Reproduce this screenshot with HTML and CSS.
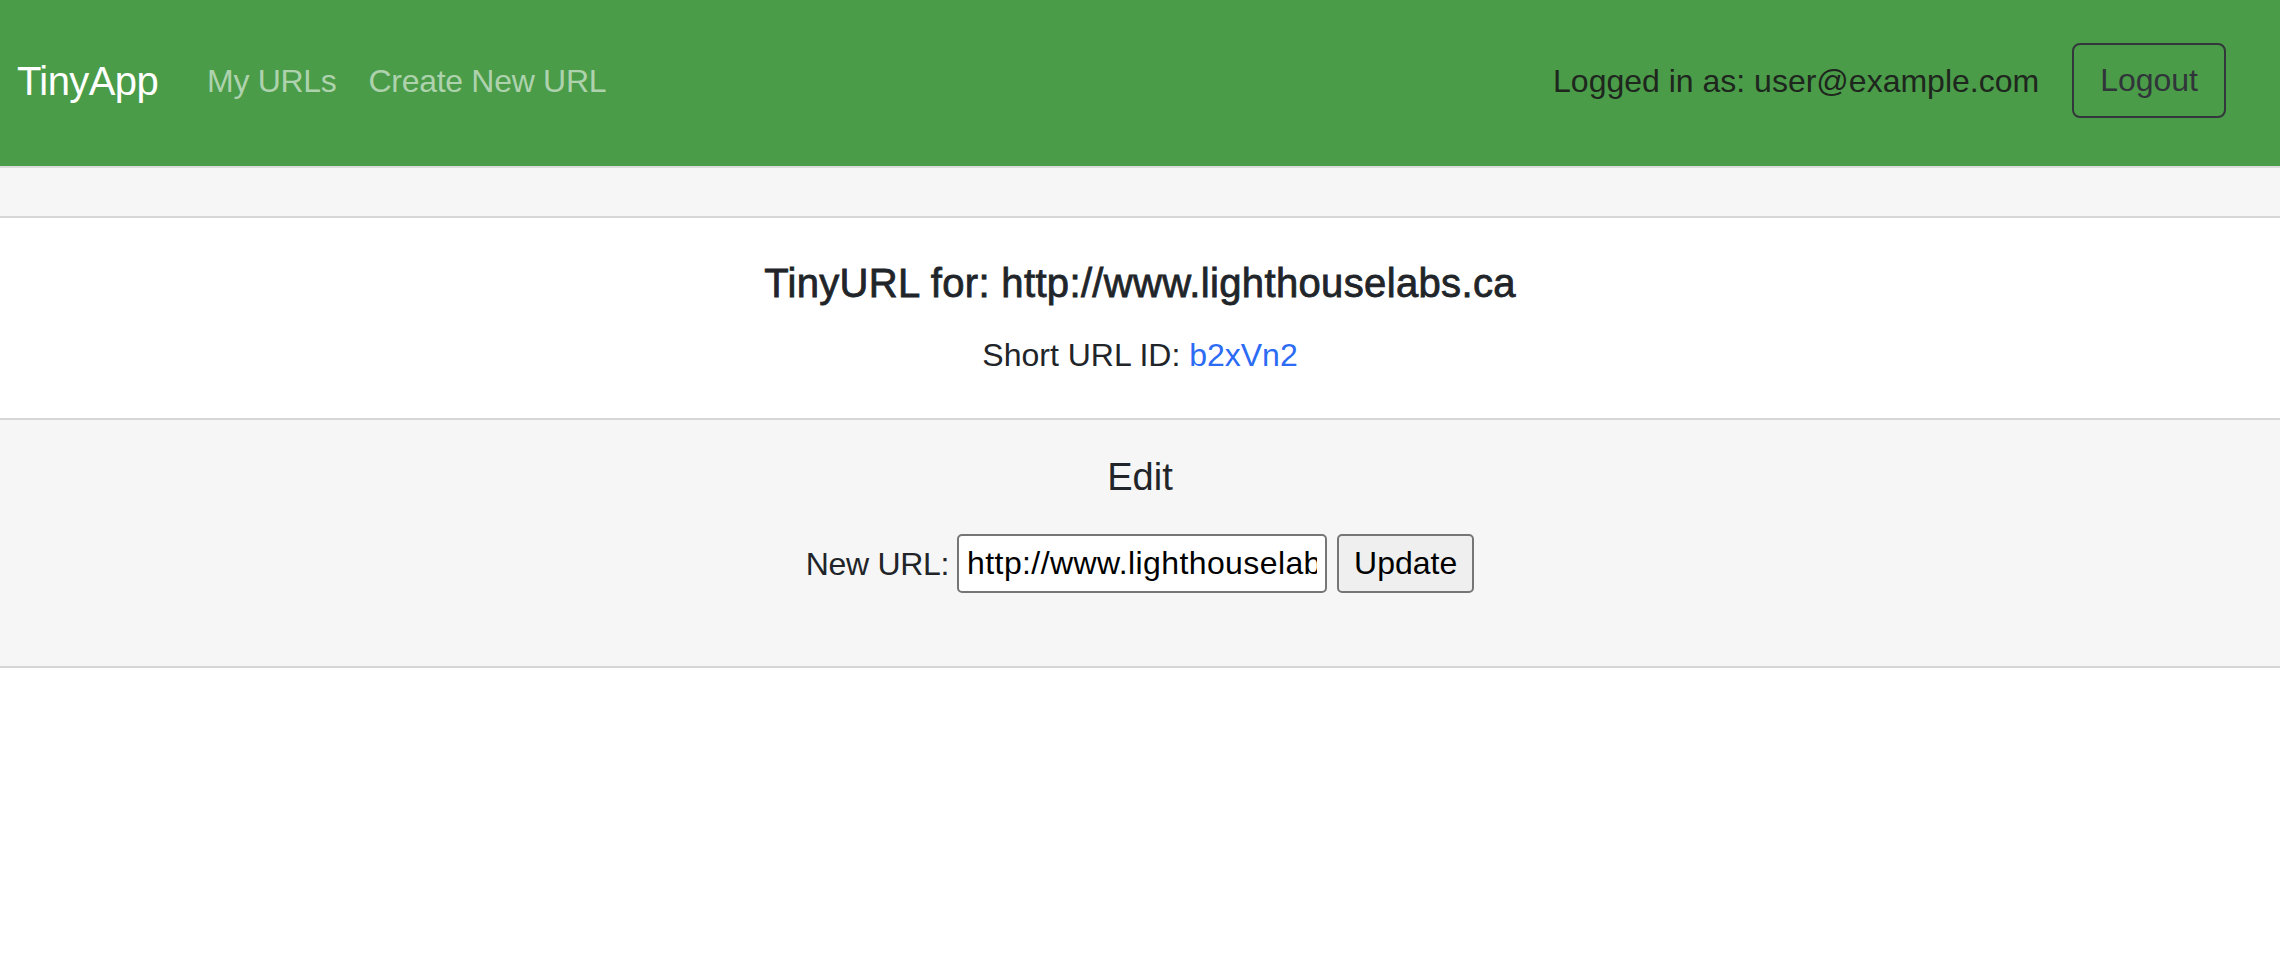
FILE: index.html
```html
<!DOCTYPE html>
<html lang="en">
<head>
<meta charset="utf-8">
<title>TinyApp</title>
<link rel="stylesheet" href="styles.css">
</head>
<body>
<nav class="topbar">
  <a class="brand" href="#">TinyApp</a>
  <ul class="nav-links">
    <li><a class="nav-link" href="#">My URLs</a></li>
    <li><a class="nav-link" href="#">Create New URL</a></li>
  </ul>
  <div class="user-area">
    <span class="user-text">Logged in as: user@example.com</span>
    <button class="logout-btn" type="button">Logout</button>
  </div>
</nav>
<div class="band"></div>
<section class="summary">
  <h2 class="summary-title">TinyURL for: http://www.lighthouselabs.ca</h2>
  <p class="summary-id">Short URL ID: <a class="id-link" href="#">b2xVn2</a></p>
</section>
<section class="edit">
  <h3 class="edit-title">Edit</h3>
  <form class="edit-form">
    <label class="edit-label" for="newurl">New URL:</label>
    <input class="edit-input" id="newurl" type="text" value="http://www.lighthouselabs.ca">
    <button class="edit-btn" type="button">Update</button>
  </form>
</section>
</body>
</html>
```

FILE: styles.css
```css
* {
  box-sizing: border-box;
}

body {
  margin: 0;
  font-family: "Liberation Sans", Arial, sans-serif;
  color: #212529;
  background: #ffffff;
}

.topbar {
  display: flex;
  align-items: center;
  height: 168px;
  padding: 0 54px 5px 17px;
  background: #4a9c48;
  border-bottom: 2px solid #dcdcdc;
}

.brand {
  font-size: 40px;
  line-height: 60px;
  color: #ffffff;
  text-decoration: none;
  letter-spacing: -0.6px;
  margin-right: 33px;
}

.nav-links {
  display: flex;
  list-style: none;
  margin: 0;
  padding: 0;
}

.nav-link {
  display: block;
  padding: 0 16px;
  font-size: 32px;
  line-height: 48px;
  letter-spacing: -0.3px;
  color: #aed2ad;
  text-decoration: none;
}

.user-area {
  margin-left: auto;
  display: flex;
  align-items: center;
}

.user-text {
  font-size: 32px;
  line-height: 48px;
  color: #1e261e;
  margin-right: 33px;
}

.logout-btn {
  height: 75px;
  padding: 0 26px;
  font-family: inherit;
  font-size: 32px;
  color: #30353a;
  background: transparent;
  border: 2px solid #33373b;
  border-radius: 8px;
}

.band {
  height: 50px;
  background: #f6f6f6;
  border-bottom: 2px solid #d6d6d6;
}

.summary {
  height: 202px;
  padding-top: 41px;
  text-align: center;
  background: #ffffff;
  border-bottom: 2px solid #d6d6d6;
}

.summary-title {
  margin: 0;
  font-size: 40px;
  line-height: 48px;
  font-weight: 400;
  letter-spacing: 0.35px;
  -webkit-text-stroke: 0.8px #212529;
}

.summary-id {
  margin: 24px 0 0;
  font-size: 32px;
  line-height: 48px;
}

.id-link {
  color: #2c6cf4;
  text-decoration: none;
}

.edit {
  height: 248px;
  padding-top: 34px;
  text-align: center;
  background: #f6f6f6;
  border-bottom: 2px solid #d6d6d6;
}

.edit-title {
  margin: 0;
  font-size: 38px;
  line-height: 46px;
  font-weight: 400;
}

.edit-form {
  margin-top: 34px;
  display: flex;
  justify-content: center;
  align-items: center;
}

.edit-label {
  font-size: 32px;
  line-height: 48px;
  letter-spacing: -0.3px;
  margin-right: 8px;
}

.edit-input {
  width: 370px;
  height: 59px;
  padding: 0 8px;
  font-family: inherit;
  font-size: 32px;
  letter-spacing: 0.4px;
  color: #000000;
  background: #ffffff;
  border: 2px solid #767676;
  border-radius: 5px;
  margin-right: 10px;
}

.edit-btn {
  height: 59px;
  padding: 0 15px;
  font-family: inherit;
  font-size: 32px;
  color: #000000;
  background: #efefef;
  border: 2px solid #767676;
  border-radius: 5px;
}
```
